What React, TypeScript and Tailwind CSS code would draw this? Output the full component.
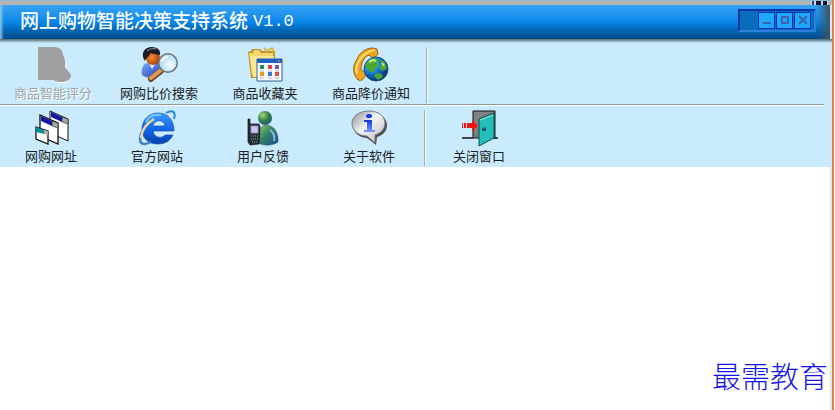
import type { ReactNode } from "react";

function Icon({ children }: { children: ReactNode }) {
  return (
    <svg viewBox="0 0 40 37" className="h-[37px] w-10 shrink-0" fill="none" aria-hidden="true">
      {children}
    </svg>
  );
}

function RatingIcon() {
  return (
    <Icon>
      <path d="M5 1h17c5 0 8 4 9 9 2 2 3 6 2 10 0 3 5 5 5 10 0 4-5 6-9 6-5 0-7-2-9-3H5z" fill="#fff" />
      <path d="M5 0h17c5 0 8 4 8 8 2 3 3 7 2 12 1 3 6 5 6 9 0 4-5 6-10 6-4 0-6-1-8-2H5z" fill="#a0a0a0" />
    </Icon>
  );
}

function SearchPersonIcon() {
  return (
    <Icon>
      <defs>
        <radialGradient id="face" cx=".4" cy=".45" r=".6">
          <stop stopColor="#f58a3a" />
          <stop offset="1" stopColor="#a8400a" />
        </radialGradient>
        <linearGradient id="suit" x1="0" y1="0" x2="1" y2="1">
          <stop stopColor="#78a8ff" />
          <stop offset="1" stopColor="#1c3fae" />
        </linearGradient>
        <radialGradient id="lens" cx=".6" cy=".6" r=".65">
          <stop stopColor="#fff" />
          <stop offset="1" stopColor="#92d3f4" />
        </radialGradient>
      </defs>
      <path d="M3 28c-1-7 1-12 6-12h10c4 2 5 6 4 11-5 4-15 5-20 1z" fill="url(#suit)" />
      <path d="M10 16l3 6 4-6z" fill="#eef3ff" />
      <ellipse cx="14" cy="11" rx="7" ry="7" fill="url(#face)" />
      <path d="M6 14C1 7 5 0 13 0c6 0 9 4 8 8-4-1-8-1-10-2 0 4-4 4-5 8z" fill="#1d1d25" />
      <path d="M8 4c2-2 6-3 9-2" stroke="#73737f" strokeWidth="1.500" />
      <path d="M23 23L12 32" stroke="#6d4a35" strokeWidth="6" strokeLinecap="round" />
      <path d="M22 23L12 31" stroke="#e8984a" strokeWidth="4" strokeLinecap="round" />
      <circle cx="29" cy="16" r="9" fill="url(#lens)" stroke="#6a7580" strokeWidth="2" />
      <circle cx="29" cy="16" r="8" stroke="#d9e1e8" />
      <path d="M23 15c0-3 3-5 6-5" stroke="#fff" strokeWidth="2" />
    </Icon>
  );
}

function FavoritesIcon() {
  return (
    <Icon>
      <path d="M3 5l3-1 1-2h8l2 2h13v27H6z" fill="#be942c" />
      <path d="M4 6h4l1-3h5l2 3h12v22H7z" fill="#f7d66c" />
      <path d="M5 9h24v21H8z" fill="#fbe596" />
      <path d="M19 1l3 3 5-3 3 5" stroke="#dfb745" strokeWidth="2" />
      <path d="M12 12h25v22H12z" fill="#fafcff" stroke="#315f98" />
      <path d="M12 12h25v4H12z" fill="#1c63c7" />
      <path d="M33 13h2v2h-2z" fill="#e85b43" />
      <path d="M15 18h4v4h-4z" fill="#26934b" />
      <path d="M23 18h4v4h-4z" fill="#d4443a" />
      <path d="M30 18h4v4h-4z" fill="#7c52b5" />
      <path d="M15 25h4v4h-4z" fill="#e39b25" />
      <path d="M23 25h4v4h-4z" fill="#4073cb" />
      <path d="M30 25h4v4h-4z" fill="#d85050" />
      <path d="M15 24h4M23 24h4M30 24h4M15 31h4M23 31h4M30 31h4" stroke="#a8b5ca" />
    </Icon>
  );
}

function PhoneGlobeIcon() {
  return (
    <Icon>
      <defs>
        <radialGradient id="ocean" cx=".32" cy=".28" r=".75">
          <stop stopColor="#7fd4ff" />
          <stop offset=".5" stopColor="#187bdb" />
          <stop offset="1" stopColor="#05316f" />
        </radialGradient>
      </defs>
      <path d="M6 32C1 25 2 18 6 12 9 5 15 1 22 1l4 1 1 5c-2 3-5 4-7 3l-2-2c-5 2-8 8-8 15l4 2c1 3 0 6-3 8-2 1-4 0-5-1z" fill="#f2a21c" stroke="#9c6410" />
      <path d="M6 27C3 18 11 5 24 3" stroke="#ffe17c" strokeWidth="2" />
      <circle cx="25" cy="22" r="12" fill="url(#ocean)" stroke="#164e79" />
      <path d="M17 14l7-3 4 2-2 3 2 2-4 4-1 4-5-2-4-5zM29 12l5 3 2 7-5 2-3-4 3-3zM25 26l6 1 1 3-5 3-4-4z" fill="#4ba735" />
      <path d="M18 15l4-2 3 1M31 16l2 3" stroke="#baf06a" strokeWidth="2" />
    </Icon>
  );
}

function WindowsIcon() {
  return (
    <Icon>
      <path d="M19 1l18 8v22l-18-8z" fill="#fff" stroke="#111" />
      <path d="M20 2l11 5v5l-11-5z" fill="#1717a4" />
      <path d="M31 7l6 2v5l-6-2z" fill="#a8a8a8" stroke="#222" strokeWidth=".6" />
      <path d="M9 5l18 8v21L9 26z" fill="#fff" stroke="#111" strokeWidth="1.300" />
      <path d="M10 6l11 5v5l-11-5z" fill="#1717a4" />
      <path d="M21 11l6 2v5l-6-2z" fill="#a8a8a8" stroke="#222" strokeWidth=".6" />
      <path d="M5 17l12 4v13L5 29z" fill="#fff" stroke="#111" strokeWidth="1.300" />
      <path d="M5 17l8 3v4l-8-2z" fill="#008d8d" />
      <path d="M13 20l4 1v4l-4-1z" fill="#aaa" />
    </Icon>
  );
}

function BrowserIcon() {
  return (
    <Icon>
      <defs>
        <linearGradient id="browser" x1="0" y1="0" x2="0" y2="1">
          <stop stopColor="#3b9dff" />
          <stop offset=".5" stopColor="#1667ed" />
          <stop offset="1" stopColor="#0741aa" />
        </linearGradient>
      </defs>
      <path d="M29 3c7-4 10-1 8 6" stroke="#2489dc" strokeWidth="2" />
      <path fillRule="evenodd" d="M21 3c10 0 16 7 16 18H16c1 7 9 8 12 4h8c-3 6-8 9-15 9C11 34 5 28 5 19 5 10 12 3 21 3zm-5 13h12c-1-7-11-7-12 0z" fill="url(#browser)" stroke="#1454aa" strokeWidth=".7" />
      <path d="M9 12C12 6 18 4 24 5" stroke="#7bcaff" strokeWidth="2" />
      <path d="M15 10C8 16 3 23 3 29c0 6 5 6 11 3" stroke="#397ec1" strokeWidth="2.500" />
      <path d="M17 9C10 13 5 20 4 28" stroke="#eed8a0" strokeWidth="2.500" />
    </Icon>
  );
}

function FeedbackIcon() {
  return (
    <Icon>
      <defs>
        <linearGradient id="buddy" x1="0" y1="0" x2="1" y2="1">
          <stop stopColor="#94d267" />
          <stop offset=".45" stopColor="#338463" />
          <stop offset="1" stopColor="#174a91" />
        </linearGradient>
        <radialGradient id="buddy-head" cx=".35" cy=".3" r=".8">
          <stop stopColor="#a6d96c" />
          <stop offset=".5" stopColor="#35834d" />
          <stop offset="1" stopColor="#155474" />
        </radialGradient>
      </defs>
      <path d="M15 33c-1-10 1-17 8-18 8 0 13 8 12 17-5 4-15 4-20 1z" fill="url(#buddy)" stroke="#336770" strokeWidth=".5" />
      <circle cx="22" cy="8" r="7" fill="url(#buddy-head)" />
      <path d="M27 20c4 3 5 7 4 11" stroke="#8abbe1" strokeWidth="2" />
      <path d="M5 9h2v5h9l1 3-1 17-9 1-2-3z" fill="#252e38" stroke="#111" strokeWidth=".7" />
      <path d="M8 16h7v7H8z" fill="#cec7ff" stroke="#8e8eb1" />
      <path d="M8 26h7M8 29h7M9 32h6" stroke="#99a9b0" strokeDasharray="1 1" />
    </Icon>
  );
}

function AboutIcon() {
  return (
    <Icon>
      <defs>
        <linearGradient id="bubble" x1="0" y1="0" x2="1" y2="1">
          <stop stopColor="#8f8f94" />
          <stop offset=".45" stopColor="#f4f4f6" />
          <stop offset="1" stopColor="#b7b7bd" />
        </linearGradient>
        <linearGradient id="info" x1="0" y1="0" x2="0" y2="1">
          <stop stopColor="#1238db" />
          <stop offset="1" stopColor="#789dff" />
        </linearGradient>
      </defs>
      <path d="M21 2c9 0 17 6 17 13 0 6-4 10-10 12l-1 8-9-7C8 27 4 21 4 15 4 8 12 2 21 2z" fill="#4b4b50" />
      <path d="M20 1c9 0 16 5 16 12 0 6-4 10-10 12v8l-8-7C9 26 3 20 3 13 3 6 11 1 20 1z" fill="url(#bubble)" stroke="#77777d" />
      <ellipse cx="20" cy="6" rx="3" ry="2" fill="#1238db" />
      <path d="M15 10h8v10h3v2H15v-2h3v-8h-3z" fill="url(#info)" />
    </Icon>
  );
}

function ExitIcon() {
  return (
    <Icon>
      <path d="M3 28h11M34 28h5" stroke="#111" strokeWidth="1.500" />
      <path d="M14 1h22v27H14z" fill="#808080" stroke="#111" />
      <path d="M20 9l15-6v25l-15 8z" fill="#24bdb8" stroke="#07534f" />
      <path d="M21 10l13-5" stroke="#8cf1e8" />
      <circle cx="25" cy="19" r="2" fill="#064454" />
      <path d="M24 18h1" stroke="#fff" />
      <path d="M3 13h1v5H3zM5 13h2v5H5zM8 13h5v-3l6 6-6 5v-3H8z" fill="#f01414" />
    </Icon>
  );
}

type ToolProps = { label: string; icon: ReactNode; disabled?: boolean };

function Tool({ label, icon, disabled = false }: ToolProps) {
  return (
    <button
      type="button"
      disabled={disabled}
      className="flex w-[106px] shrink-0 flex-col items-center gap-px text-[13px] leading-[18px] text-[#1b2025] disabled:text-[#a0a4a7] disabled:[text-shadow:1px_1px_0_#fff]"
    >
      {icon}
      <span className="whitespace-nowrap">{label}</span>
    </button>
  );
}

function Divider() {
  return <div className="ml-0.5 w-[2px] shrink-0 border-r border-l border-r-white border-l-[#a3aaad]" />;
}

const captionButton =
  "flex h-[17px] w-[17px] items-center justify-center border border-[#0a30c0] bg-[#1fa8f8] text-[#3a62b0]";

export default function App() {
  return (
    <div className="flex h-screen bg-white pr-px font-['Liberation_Sans','Noto_Sans_CJK_SC',sans-serif]">
      <div className="flex min-w-0 flex-1 flex-col border-r-2 border-[#f47a3c]">
        <div className="flex h-[5px] shrink-0 justify-end border-t border-[#8bb9cb] bg-[#b4b4b4] pr-1">
          <div className="flex gap-[2px] bg-[#c8d4f0] px-px">
            <div className="w-[2px] bg-[#2438a0]" />
            <div className="w-[5px] bg-[#101830]" />
            <div className="w-1 bg-[#101830]" />
          </div>
        </div>
        <header className="flex h-[34px] shrink-0 items-stretch bg-linear-to-b from-[#35a2f2] via-[#0886e8] via-50% to-[#004884]">
          <div className="w-1 bg-linear-to-r from-[#8fc4e4] to-transparent" />
          <div className="flex flex-1 items-center pl-4">
            <h1 className="flex flex-1 items-center gap-[5px] text-[19px] leading-6 font-medium whitespace-nowrap text-white">
              <span>网上购物智能决策支持系统</span>
              <span className="font-['Liberation_Mono',monospace] text-[17px]">V1.0</span>
            </h1>
            <div className="mb-1 flex h-[23px] items-center gap-px border-2 border-[#0b34a8] border-r-[#2d80da] border-b-[#2d80da] bg-[#086dbb] pr-[3px] pl-[18px]">
              <button type="button" aria-label="最小化" className={captionButton}>
                <svg viewBox="0 0 12 12" className="h-3 w-3" stroke="currentColor" strokeWidth="2">
                  <path d="M2 9h8" />
                </svg>
              </button>
              <button type="button" aria-label="最大化" className={captionButton}>
                <svg viewBox="0 0 12 12" className="h-3 w-3" fill="none" stroke="currentColor" strokeWidth="2">
                  <path d="M3 3h6v6H3z" />
                </svg>
              </button>
              <button type="button" aria-label="关闭" className={captionButton}>
                <svg viewBox="0 0 12 12" className="h-3 w-3" stroke="currentColor" strokeWidth="2">
                  <path d="M2 2l8 8M10 2l-8 8" />
                </svg>
              </button>
            </div>
          </div>
          <div className="w-[14px] bg-linear-to-r from-transparent to-[#3c5568]" />
          <div className="w-[2px] bg-[#d3ecf8]" />
        </header>
        <nav aria-label="工具栏" className="shrink-0 bg-[#c9ebfd]">
          <div className="h-1 bg-linear-to-b from-[#4f6977] to-[#c9ebfd]" />
          <div className="flex h-[61px] pt-1 pb-px">
            <Tool label="商品智能评分" icon={<RatingIcon />} disabled />
            <Tool label="网购比价搜索" icon={<SearchPersonIcon />} />
            <Tool label="商品收藏夹" icon={<FavoritesIcon />} />
            <Tool label="商品降价通知" icon={<PhoneGlobeIcon />} />
            <Divider />
          </div>
          <div className="mr-2 h-[2px] border-t border-b border-t-[#8d989d] border-b-white" />
          <div className="-ml-0.5 flex h-[61px] pt-1 pb-px">
            <Tool label="网购网址" icon={<WindowsIcon />} />
            <Tool label="官方网站" icon={<BrowserIcon />} />
            <Tool label="用户反馈" icon={<FeedbackIcon />} />
            <Tool label="关于软件" icon={<AboutIcon />} />
            <Divider />
            <Tool label="关闭窗口" icon={<ExitIcon />} />
          </div>
        </nav>
        <main className="flex flex-1 items-end justify-end border-r-2 border-[#d3ecf8] pr-[2px] pb-3">
          <p className="text-[29px] leading-10 font-light text-[#1414e6]">最需教育</p>
        </main>
      </div>
    </div>
  );
}
